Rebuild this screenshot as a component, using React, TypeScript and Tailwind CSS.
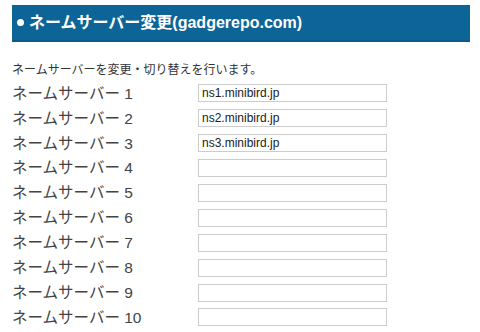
import React from "react";

const servers = ["ns1.minibird.jp", "ns2.minibird.jp", "ns3.minibird.jp", "", "", "", "", "", "", ""];

export default function App() {
  return (
    <div className="h-[332px] w-[480px] overflow-hidden bg-white pl-[12px] pr-[10px] pt-[5px] font-['Liberation_Sans','Noto_Sans_CJK_JP',sans-serif] text-[#333]">
      {/* Heading bar */}
      <div className="flex h-[37px] items-center gap-[5px] border-b-2 border-[#0a5a8c] bg-[#0c6497] pl-[5px] text-white">
        <span className="h-[7px] w-[7px] rounded-full bg-white" />
        <h1 className="text-[16px] font-bold">ネームサーバー変更(gadgerepo.com)</h1>
      </div>

      <p className="mt-[20px] text-[12px] leading-[16px]">ネームサーバーを変更・切り替えを行います。</p>

      <div className="mt-[3px]">
        {servers.map((value, i) => (
          <div key={i} className="flex h-[24.9px] items-center">
            <label className="w-[186px] text-[15.5px] text-[#444]">ネームサーバー {i + 1}</label>
            <input
              type="text"
              defaultValue={value}
              className="h-[18px] w-[189px] border border-[#ccc] px-[3px] text-[12px] text-[#222] outline-none"
            />
          </div>
        ))}
      </div>
    </div>
  );
}
